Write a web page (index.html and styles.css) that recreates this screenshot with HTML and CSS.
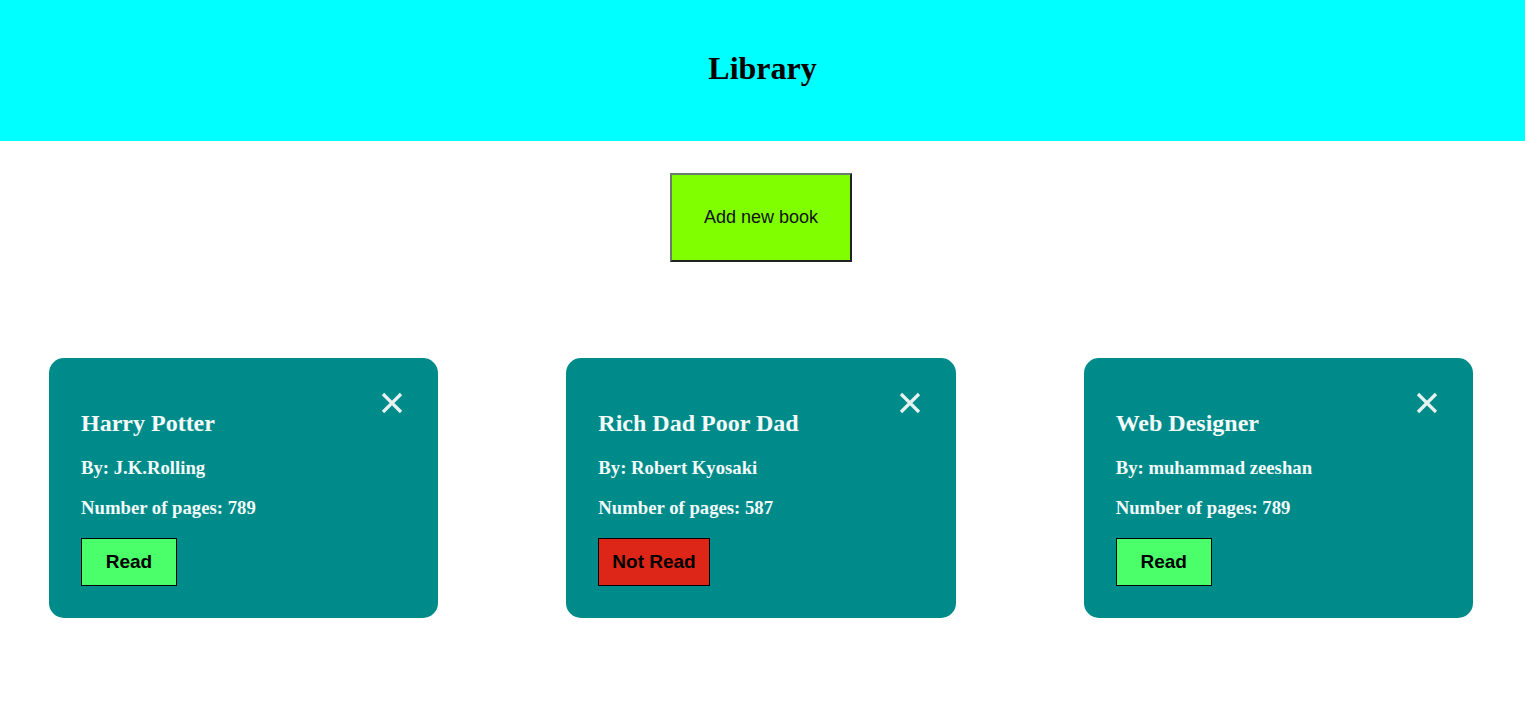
FILE: index.html
```
<!DOCTYPE html>
<html lang="en">
<head>
<meta charset="utf-8">
<title>Library</title>
<link rel="stylesheet" href="styles.css">
</head>
<body>
<header class="site-header">
  <h1 class="site-title">Library</h1>
</header>
<main class="content">
  <div class="actions">
    <button class="add-btn" type="button">Add new book</button>
  </div>
  <section class="books">
    <article class="card">
      <button class="close" type="button" aria-label="Remove">
        <svg viewBox="0 0 22 22" width="22" height="22"><path d="M2 2 L20 20 M20 2 L2 20" /></svg>
      </button>
      <h2 class="card-title">Harry Potter</h2>
      <h3 class="card-line card-author">By: J.K.Rolling</h3>
      <h3 class="card-line card-pages">Number of pages: 789</h3>
      <button class="status status-read" type="button">Read</button>
    </article>
    <article class="card">
      <button class="close" type="button" aria-label="Remove">
        <svg viewBox="0 0 22 22" width="22" height="22"><path d="M2 2 L20 20 M20 2 L2 20" /></svg>
      </button>
      <h2 class="card-title">Rich Dad Poor Dad</h2>
      <h3 class="card-line card-author">By: Robert Kyosaki</h3>
      <h3 class="card-line card-pages">Number of pages: 587</h3>
      <button class="status status-not" type="button">Not Read</button>
    </article>
    <article class="card">
      <button class="close" type="button" aria-label="Remove">
        <svg viewBox="0 0 22 22" width="22" height="22"><path d="M2 2 L20 20 M20 2 L2 20" /></svg>
      </button>
      <h2 class="card-title">Web Designer</h2>
      <h3 class="card-line card-author">By: muhammad zeeshan</h3>
      <h3 class="card-line card-pages">Number of pages: 789</h3>
      <button class="status status-read" type="button">Read</button>
    </article>
  </section>
</main>
</body>
</html>
```
FILE: styles.css
```
html, body {
  margin: 0;
  padding: 0;
  background: #ffffff;
}

body {
  font-family: "Liberation Serif", "Times New Roman", serif;
}

.site-header {
  background: #00ffff;
  height: 141px;
  box-sizing: border-box;
  padding-top: 50px;
}

.site-title {
  margin: 0;
  text-align: center;
  font-size: 32px;
  line-height: 37px;
  font-weight: bold;
  color: #000;
}

.actions {
  display: flex;
  justify-content: center;
  padding-top: 32px;
}

.add-btn {
  width: 182px;
  height: 89px;
  margin-right: 3px;
  background: #7fff00;
  border-width: 2px;
  border-style: solid;
  border-color: #6b7b6b #222 #222 #6b7b6b;
  font-family: "Liberation Sans", Arial, sans-serif;
  font-size: 18px;
  color: #111;
  padding: 0;
}

.books {
  display: grid;
  grid-template-columns: repeat(3, 1fr);
  column-gap: 128px;
  padding: 96px 52px 0 49px;
}

.card {
  position: relative;
  background: #008b8b;
  border-radius: 15px;
  padding: 52px 32px 32px;
  color: #f4fbfb;
}

.close {
  position: absolute;
  top: 34px;
  right: 35px;
  width: 22px;
  height: 22px;
  padding: 0;
  border: 0;
  background: transparent;
}

.close svg {
  display: block;
  stroke: #e6f2f0;
  stroke-width: 3.2;
  stroke-linecap: butt;
  fill: none;
}

.card-title {
  margin: 0;
  font-size: 24px;
  line-height: 27px;
  font-weight: bold;
}

.card-line {
  margin: 0;
  font-size: 18.72px;
  line-height: 21px;
  font-weight: bold;
}

.card-author {
  margin-top: 20px;
}

.card-pages {
  margin-top: 19px;
}

.status {
  display: block;
  margin-top: 20px;
  height: 48px;
  border: 1px solid #000;
  font-family: "Liberation Sans", Arial, sans-serif;
  font-size: 19px;
  font-weight: bold;
  color: #000;
}

.status-read {
  width: 96px;
  padding: 0;
  background: #4aff6a;
}

.status-not {
  padding: 0 13px;
  background: #de2618;
}
```
